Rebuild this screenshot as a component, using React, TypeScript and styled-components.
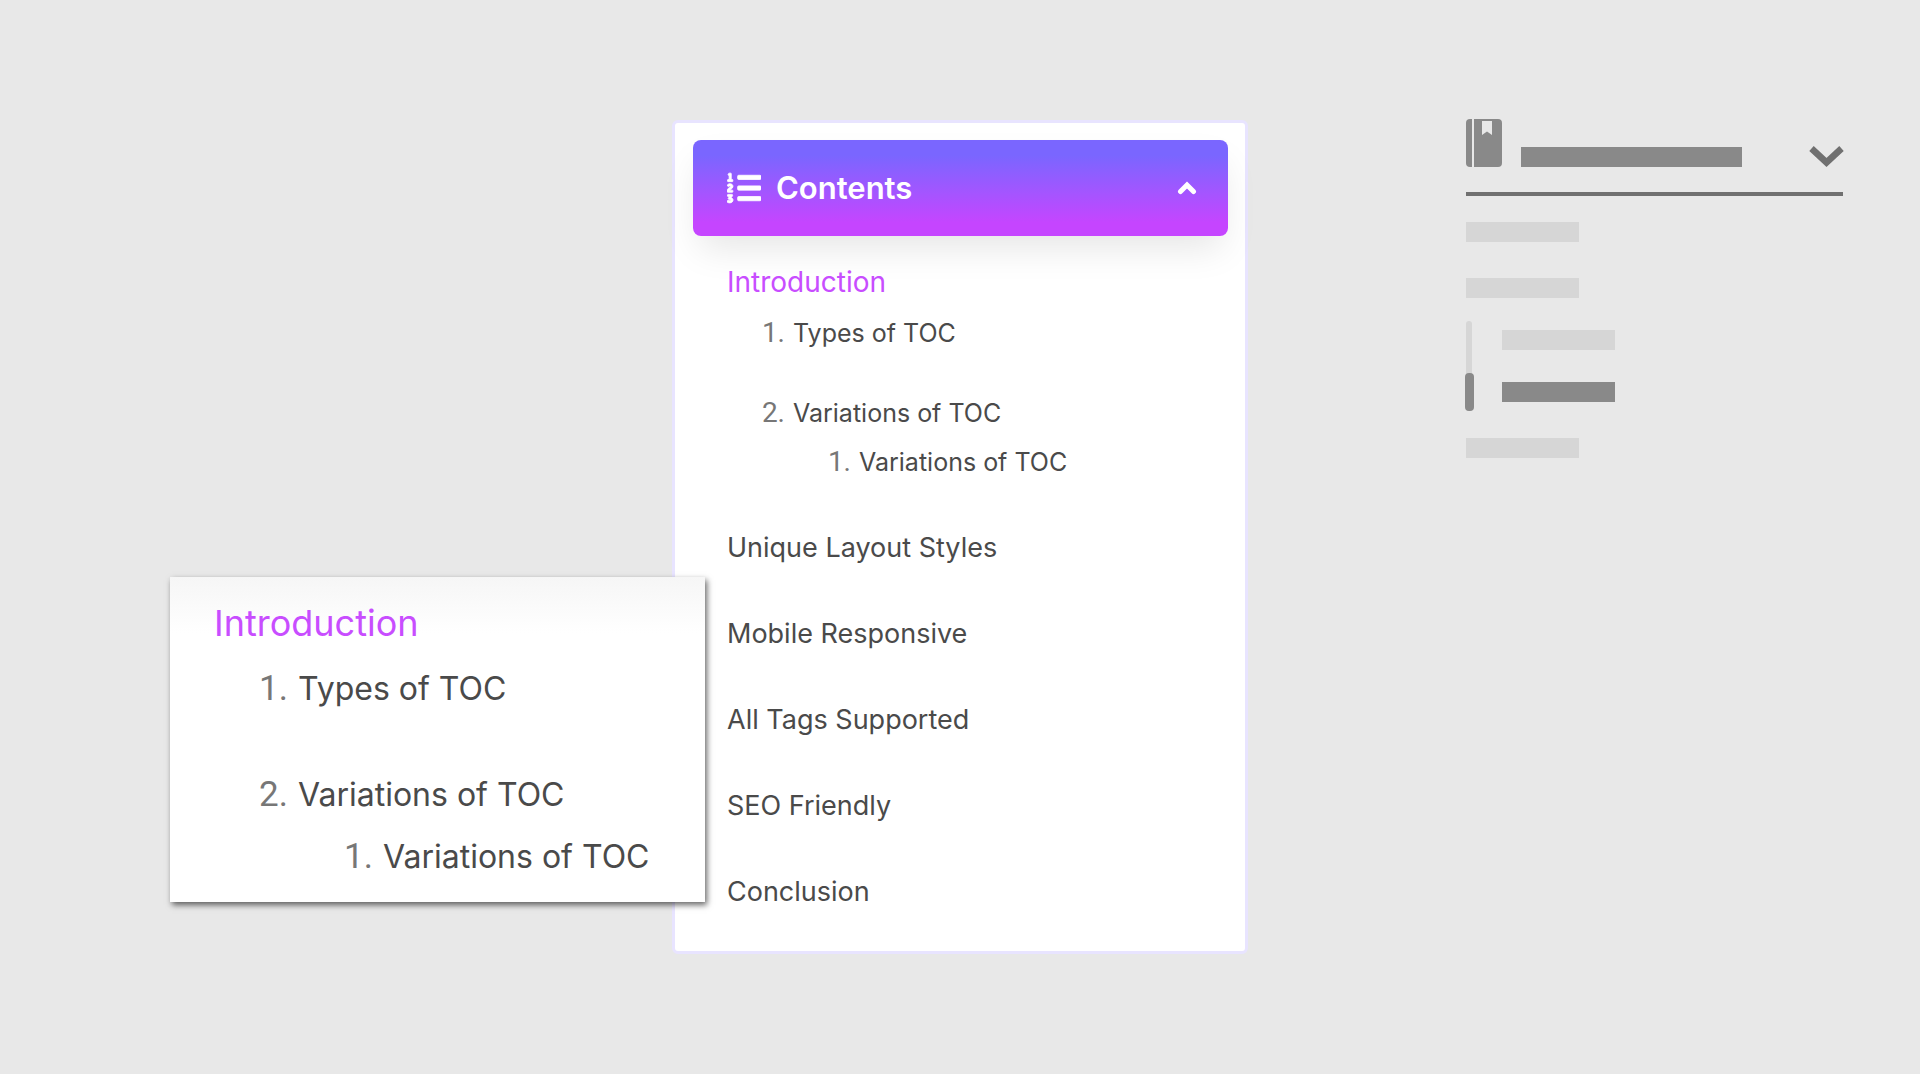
import React from "react";
import styled, { createGlobalStyle } from "styled-components";
import { FaListOl } from "react-icons/fa";

const GlobalStyle = createGlobalStyle`
  *, *::before, *::after { box-sizing: border-box; }
  body {
    margin: 0;
    background: #e8e8e8;
    font-family: Inter, "Noto Sans", sans-serif;
  }
  ol, ul { list-style: none; margin: 0; padding: 0; }
`;

const Page = styled.main`
  display: grid;
  grid-template-columns: minmax(0, 1fr) minmax(0, 576px) minmax(0, 1fr);
  align-items: start;
  min-height: 100vh;
  padding: 120px 0;
`;

const CardArea = styled.div`
  grid-column: 2;
  position: relative;
`;

const Card = styled.section`
  padding: 17px 17px 39px 18px;
  border: 3px solid #e8e4ff;
  border-radius: 6px;
  background: #fff;
`;

const CardHeader = styled.button`
  display: flex;
  align-items: center;
  gap: 15px;
  width: 100%;
  height: 96px;
  padding: 0 31px 0 34px;
  border: 0;
  border-radius: 8px;
  background: linear-gradient(180deg, #7a66ff 16%, #a455ff 55%, #c545ff 86%);
  box-shadow: 0 18px 36px -6px rgba(0, 0, 0, 0.1);
  color: #fff;
  font: 600 31px/40px Inter, "Noto Sans", sans-serif;
  text-align: left;
  cursor: pointer;
`;

const ListIcon = styled(FaListOl)`
  stroke: #fff;
  stroke-width: 12px;
`;

const HeaderTitle = styled.span`
  flex: 1;
`;

const CardBody = styled.nav`
  padding: 26px 34px 0;
`;

const Popup = styled.aside`
  position: absolute;
  top: 457px;
  right: calc(100% - 33px);
  width: 535px;
  padding: 20px 44px 19px;
  background: linear-gradient(180deg, #f6f6f6 0, #fff 56px);
  box-shadow: 2px 3px 6px rgba(0, 0, 0, 0.6);
`;

type Size = { $large?: boolean };

const List = styled.ol<Size & { $gap: number }>`
  display: flex;
  flex-direction: column;
  gap: ${(p) => p.$gap}px;
`;

const SubList = styled(List)<{ $top: number; $indent: number }>`
  margin-top: ${(p) => p.$top}px;
  padding-left: ${(p) => p.$indent}px;
`;

const Row = styled.div<Size>`
  display: flex;
  gap: ${(p) => (p.$large ? 10 : 8)}px;
  line-height: ${(p) => (p.$large ? 52 : 40)}px;
  white-space: nowrap;
`;

const Marker = styled.span<Size>`
  width: ${(p) => (p.$large ? 30 : 24)}px;
  color: #777;
  font-family: Roboto, sans-serif;
  font-size: ${(p) => (p.$large ? 35 : 28)}px;
  text-align: right;
`;

const TocLink = styled.a<Size & { $active?: boolean; $sub?: boolean }>`
  color: ${(p) => (p.$active ? "#c84dff" : "#4a4a4a")};
  font-size: ${(p) =>
    p.$large ? (p.$sub ? 32 : 36) : p.$sub ? 25 : p.$active ? 28 : 27}px;
  text-decoration: none;
`;

const Outline = styled.aside`
  grid-column: 3;
  justify-self: end;
  width: 377px;
  margin-right: 77px;
`;

const OutlineHeader = styled.div`
  display: flex;
  align-items: flex-end;
  height: 76px;
  padding-bottom: 25px;
  border-bottom: 4px solid #707070;
  gap: 19px;

  svg { display: block; flex: none; }
  svg:last-child { margin: 0 -1px 0 auto; }
`;

const Bar = styled.div<{ $wide?: boolean; $dark?: boolean }>`
  width: ${(p) => (p.$wide ? 221 : 113)}px;
  height: 20px;
  background: ${(p) => (p.$dark ? "#898989" : "#d6d6d6")};
`;

const OutlineBody = styled.div`
  display: flex;
  flex-direction: column;
  gap: 36px;
  padding-top: 26px;
`;

const Branch = styled.div`
  display: flex;
  gap: 30px;
  margin: -13px 0 -9px;
`;

const Track = styled.div`
  display: flex;
  align-items: flex-end;
  width: 6px;
  height: 90px;
  border-radius: 3px;
  background: #d6d6d6;
`;

const Thumb = styled.div`
  flex: none;
  width: 9px;
  height: 38px;
  margin-left: -1px;
  border-radius: 4px;
  background: #898989;
`;

const BranchItems = styled.div`
  display: flex;
  flex-direction: column;
  gap: 32px;
  padding-top: 9px;
`;

function IntroEntry({ large }: { large?: boolean }) {
  const sub = (marker: string, label: string) => (
    <Row $large={large}>
      <Marker $large={large}>{marker}</Marker>
      <TocLink href="#" $large={large} $sub>{label}</TocLink>
    </Row>
  );
  return (
    <li>
      <Row $large={large}>
        <TocLink href="#" $active $large={large}>Introduction</TocLink>
      </Row>
      <SubList $gap={large ? 54 : 40} $top={large ? 14 : 11} $indent={large ? 44 : 34}>
        <li>{sub("1.", "Types of TOC")}</li>
        <li>
          {sub("2.", "Variations of TOC")}
          <SubList $gap={0} $top={large ? 10 : 9} $indent={large ? 85 : 66}>
            <li>{sub("1.", "Variations of TOC")}</li>
          </SubList>
        </li>
      </SubList>
    </li>
  );
}

const sections = [
  "Unique Layout Styles",
  "Mobile Responsive",
  "All Tags Supported",
  "SEO Friendly",
  "Conclusion",
];

export default function App() {
  return (
    <>
      <GlobalStyle />
      <Page>
        <CardArea>
          <Card>
            <CardHeader type="button" aria-expanded="true">
              <ListIcon size={34} aria-hidden="true" />
              <HeaderTitle>Contents</HeaderTitle>
              <svg width="20" height="14" viewBox="0 0 20 14" fill="none" aria-hidden="true">
                <path d="M3.5 10.5 10 4l6.5 6.5" stroke="#fff" strokeWidth="5" strokeLinecap="round" />
              </svg>
            </CardHeader>
            <CardBody aria-label="Contents">
              <List $gap={46}>
                <IntroEntry />
                {sections.map((label) => (
                  <li key={label}>
                    <Row>
                      <TocLink href="#">{label}</TocLink>
                    </Row>
                  </li>
                ))}
              </List>
            </CardBody>
          </Card>
          <Popup>
            <List $gap={0}>
              <IntroEntry large />
            </List>
          </Popup>
        </CardArea>
        <Outline aria-hidden="true">
          <OutlineHeader>
            <svg width="36" height="48" viewBox="0 0 36 48" fill="#898989">
              <path d="M4 0h2v48H4a4 4 0 0 1-4-4V4a4 4 0 0 1 4-4Z" />
              <path d="M8 0h24a4 4 0 0 1 4 4v40a4 4 0 0 1-4 4H8ZM16 2v14l5-3.500 5 3.500V2Z" fillRule="evenodd" />
            </svg>
            <Bar $wide $dark />
            <svg width="35" height="21" viewBox="0 0 35 21" fill="none">
              <path d="m2.500 2.500 15 14 15-14" stroke="#707070" strokeWidth="6.500" />
            </svg>
          </OutlineHeader>
          <OutlineBody>
            <Bar />
            <Bar />
            <Branch>
              <Track>
                <Thumb />
              </Track>
              <BranchItems>
                <Bar />
                <Bar $dark />
              </BranchItems>
            </Branch>
            <Bar />
          </OutlineBody>
        </Outline>
      </Page>
    </>
  );
}
